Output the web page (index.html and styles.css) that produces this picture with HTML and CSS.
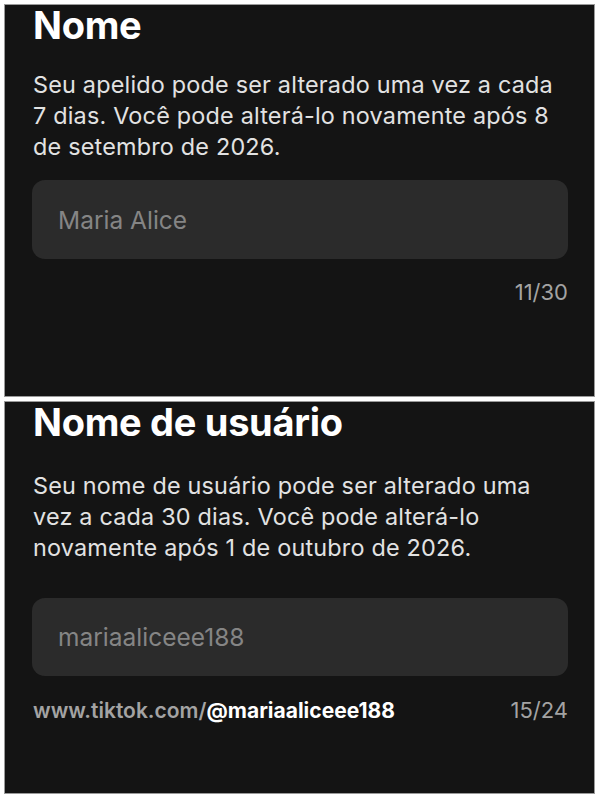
FILE: index.html
```html
<!DOCTYPE html>
<html lang="pt-BR">
<head>
    <meta charset="UTF-8">
    <meta name="viewport" content="width=device-width, initial-scale=1.0">
    <title>Editar perfil</title>
    <link rel="stylesheet" href="styles.css">
</head>
<body>
    <div class="sheet">
        <section class="panel panel-top">
            <h2 class="title">Nome</h2>
            <p class="desc">Seu apelido pode ser alterado uma vez a cada<br>7 dias. Você pode alterá-lo novamente após 8<br>de setembro de 2026.</p>
            <div class="field">
                <input type="text" placeholder="Maria Alice">
            </div>
            <div class="meta">
                <span class="count">11/30</span>
            </div>
        </section>

        <section class="panel panel-bottom">
            <h2 class="title">Nome de usuário</h2>
            <p class="desc">Seu nome de usuário pode ser alterado uma<br>vez a cada 30 dias. Você pode alterá-lo<br>novamente após 1 de outubro de 2026.</p>
            <div class="field">
                <input type="text" placeholder="mariaaliceee188">
            </div>
            <div class="meta">
                <span class="link">www.tiktok.com/<b>@mariaaliceee188</b></span>
                <span class="count">15/24</span>
            </div>
        </section>
    </div>
</body>
</html>
```

FILE: styles.css
```css
body {
    margin: 0;
    background-color: #ffffff;
    font-family: Inter, "Liberation Sans", Arial, sans-serif;
}

.sheet {
    padding: 5px 6px 7px 5px;
    display: flex;
    flex-direction: column;
    gap: 6px;
}

.panel {
    height: 391px;
    background-color: #141414;
    box-shadow: 0 0 0 1px #9a9a9a;
    padding: 0 26px 0 27px;
    box-sizing: border-box;
    display: flex;
    flex-direction: column;
}

.title {
    margin: 0 0 0 1px;
    font-size: 38px;
    line-height: 40px;
    font-weight: 700;
    color: #ffffff;
    letter-spacing: -0.3px;
}

.desc {
    margin: 24px 0 0 1px;
    font-size: 23.4px;
    line-height: 31px;
    letter-spacing: 0.2px;
    color: #e2e2e2;
    white-space: nowrap;
}

.field {
    margin-top: 18px;
}

.field input {
    width: 100%;
    height: 79px;
    box-sizing: border-box;
    border: none;
    border-radius: 13px;
    background-color: #2b2b2b;
    padding: 0 26px;
    font-family: inherit;
    font-size: 24.5px;
    color: #ffffff;
    outline: none;
}

.field input::placeholder {
    color: #858585;
}

.meta {
    display: flex;
    justify-content: space-between;
    align-items: baseline;
    margin: 20px 0 0 1px;
    line-height: 26px;
}

.count {
    margin-left: auto;
    font-size: 22px;
    color: #a3a3a3;
}

.link {
    font-size: 21px;
    color: #a3a3a3;
    font-weight: 600;
}

.link b {
    color: #ffffff;
    font-weight: 700;
}

.panel-bottom .desc {
    margin-top: 28px;
}

.panel-bottom .field {
    margin-top: 35px;
}

.panel-bottom .field input {
    height: 78px;
}

.panel-bottom .meta {
    margin-top: 21px;
}
```
